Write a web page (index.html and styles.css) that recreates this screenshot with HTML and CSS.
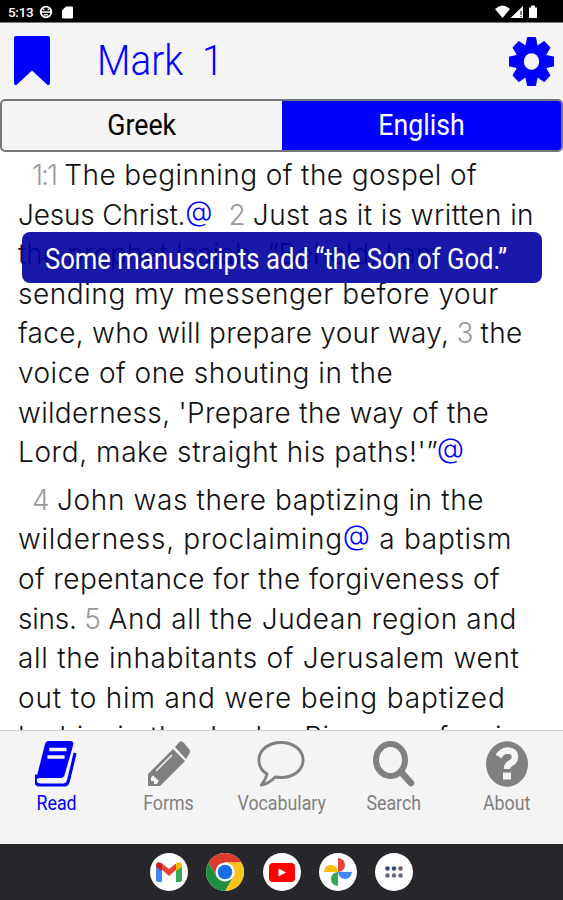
FILE: index.html
```
<!DOCTYPE html>
<html lang="en">

<head>
    <meta charset="UTF-8">
    <meta name="viewport" content="width=device-width, initial-scale=1.0">
    <title>Mark 1</title>
    <link rel="stylesheet" href="styles.css">
</head>

<body>
    <div class="status">
        <span class="clock">5:13</span>
        <svg class="status_face" width="14" height="14" viewBox="0 0 14 14">
            <circle cx="7" cy="7" r="5.3" fill="none" stroke="#fff" stroke-width="1.8" />
            <path d="M1.500 7h11M4 4.500h1.500M8.500 4.500H10M5 9.800h4" stroke="#fff" stroke-width="1.500" />
        </svg>
        <svg class="status_card" width="11" height="13" viewBox="0 0 11 13">
            <path d="M4 .5h6q1 0 1 1v10q0 1-1 1H1q-1 0-1-1v-7z" fill="#fff" />
        </svg>
        <svg class="status_right" width="44" height="14" viewBox="0 0 44 14">
            <path d="M0 4Q7.500-3 15 4L7.500 13z" fill="#fff" />
            <path d="M15.500 13L28 1v12z" fill="#fff" />
            <path d="M26 6v4M26 11v1" stroke="#000" stroke-width="1" />
            <path d="M34 2.500h2V.5h4v2h2V13h-8z" fill="#fff" />
        </svg>
    </div>

    <div class="header">
        <svg class="bookmark" width="36" height="50" viewBox="0 0 36 50">
            <path d="M2 0H34Q36 0 36 2V47Q36 50 33 48.500L18 34.500L3 48.500Q0 50 0 47V2Q0 0 2 0z" fill="#00f" />
        </svg>
        <div class="title">Mark&nbsp; 1</div>
        <svg class="gear" width="45" height="49" viewBox="-50 -50 100 100" preserveAspectRatio="none">
            <g fill="#00f">
                <path id="tooth" d="M-10-49Q-10-50-8-50H8Q10-50 10-49L14-30H-14z" />
                <use href="#tooth" transform="rotate(45)" />
                <use href="#tooth" transform="rotate(90)" />
                <use href="#tooth" transform="rotate(135)" />
                <use href="#tooth" transform="rotate(180)" />
                <use href="#tooth" transform="rotate(225)" />
                <use href="#tooth" transform="rotate(270)" />
                <use href="#tooth" transform="rotate(315)" />
            </g>
            <circle r="26.500" fill="none" stroke="#00f" stroke-width="19" />
        </svg>
    </div>

    <div class="tabs">
        <div class="tab"><span>Greek</span></div>
        <div class="tab active"><span>English</span></div>
    </div>

    <div class="reader">
        <p>
            <span class="line l1"><i>1:1</i> The beginning of the gospel of</span>
            <span class="line l2"><span class="tight">Jesus Christ.</span><b>@</b>&nbsp; <i>2</i> Just as it is written in</span>
            <span class="line l3">the prophet Isaiah, “Behold, I am</span>
            <span class="line l4">sending my messenger before your</span>
            <span class="line l5">face, who will prepare your way, <i>3</i> the</span>
            <span class="line l6">voice of one shouting in the</span>
            <span class="line l7">wilderness, 'Prepare the way of the</span>
            <span class="line l8">Lord, make straight his paths!'”<b>@</b></span>
        </p>
        <p>
            <span class="line l9"><i>4</i> John was there baptizing in the</span>
            <span class="line l10">wilderness, proclaiming<b>@</b> a baptism</span>
            <span class="line l11">of repentance for the forgiveness of</span>
            <span class="line l12"><span class="tight">sins.</span> <i>5</i> And all the Judean region and</span>
            <span class="line l13">all the inhabitants of Jerusalem went</span>
            <span class="line l14">out to him and were being baptized</span>
            <span class="line l15">by him in the Jordan River, confessing</span>
        </p>
        <div class="toast"><span>Some manuscripts add “the Son of God.”</span></div>
    </div>

    <div class="nav">
        <div class="item active">
            <svg width="42" height="46" viewBox="1 0 44 46" preserveAspectRatio="none">
                <path d="M15 0H38Q42 0 41 4L32 34Q31 37 28 37H6Q3 37 2 39L11 5Q12 0 15 0z" fill="currentColor" />
                <path d="M3 34Q0 38 2 42Q3 44 7 44H31Q35 44 36 40L43 12" fill="none" stroke="currentColor" stroke-width="3.200" />
                <path d="M16 8.500H34M14 16H32" stroke="#f4f4f4" stroke-width="3.400" />
            </svg>
            <span>Read</span>
        </div>
        <div class="item">
            <svg width="42" height="46" viewBox="0 0 42 46">
                <path d="M25 8L37 20L12 45H0V33z" fill="currentColor" />
                <path d="M27 6L31 1.500Q33-1 36 2L41 8Q43 10 41 13L38 18z" fill="currentColor" />
                <path d="M3 36.500L5 34.500L11 40L8.500 43H6V40H3z" fill="#f4f4f4" />
                <path d="M8 30L24 14" stroke="#f4f4f4" stroke-width="1.500" />
            </svg>
            <span>Forms</span>
        </div>
        <div class="item">
            <svg width="48" height="46" viewBox="0 0 50 46" preserveAspectRatio="none">
                <path d="M25 1.500C38 1.500 48 9 48 19S38 36.500 25 36.500Q22 36.500 19 36Q12 43 4.500 44Q9 39 10.500 33C5 30 2 25 2 19C2 9 12 1.500 25 1.500z" fill="none" stroke="currentColor" stroke-width="3" stroke-linejoin="round" />
            </svg>
            <span>Vocabulary</span>
        </div>
        <div class="item">
            <svg width="42" height="46" viewBox="0 0 42 46">
                <ellipse cx="17.500" cy="19" rx="14.500" ry="16" fill="none" stroke="currentColor" stroke-width="6" />
                <path d="M28 31L38 42" stroke="currentColor" stroke-width="6.500" stroke-linecap="round" />
            </svg>
            <span>Search</span>
        </div>
        <div class="item">
            <svg width="42" height="46" viewBox="0 0 42 46">
                <ellipse cx="21" cy="23" rx="21" ry="22.800" fill="currentColor" />
                <path d="M12.500 15.500Q16 9.500 22 9.500Q29 10 29 16Q29 20 25 22Q21 24 21 28" fill="none" stroke="#f4f4f4" stroke-width="6.500" />
                <path d="M17 31.500H25V38.500H17z" fill="#f4f4f4" />
            </svg>
            <span>About</span>
        </div>
    </div>

    <div class="dock">
        <div class="app">
            <svg width="26" height="20" viewBox="0 0 26 20">
                <path d="M0 4L6 8V20H2Q0 20 0 18z" fill="#4285f4" />
                <path d="M20 8L26 4V18Q26 20 24 20H20z" fill="#34a853" />
                <path d="M6 1.500L13 7L20 1.500V8L13 14L6 8z" fill="#ea4335" />
                <path d="M0 4Q0-2 6 1.500V9L0 5z" fill="#c5221f" />
                <path d="M26 4Q26-2 20 1.500V9L26 5z" fill="#fbbc04" />
            </svg>
        </div>
        <div class="app">
            <svg width="38" height="38" viewBox="-19 -19 38 38">
                <path d="M-16.450-9.500A19 19 0 0 1 16.450-9.500L0-9.500L-8.200 4.700z" fill="#db3a2c" />
                <path d="M16.450-9.500A19 19 0 0 1 0 19L8.200 4.700L0-9.500z" fill="#fcc31e" />
                <path d="M0 19A19 19 0 0 1-16.450-9.500L-8.200 4.700L8.200 4.700z" fill="#1f8e3e" />
                <circle r="9.500" fill="#fff" />
                <circle r="7.300" fill="#1a6fe8" />
            </svg>
        </div>
        <div class="app">
            <svg width="26" height="19" viewBox="0 0 26 19">
                <rect width="26" height="19" rx="4" fill="#f00" />
                <path d="M9.500 5.500L17 9.500L9.500 13.500z" fill="#fff" />
            </svg>
        </div>
        <div class="app">
            <svg width="28" height="28" viewBox="-14 -14 28 28">
                <path d="M0 0V-14Q7-13 7-7Q7-1 0 0z" fill="#ea4335" />
                <path d="M0 0H14Q13 7 7 7Q1 7 0 0z" fill="#4285f4" />
                <path d="M0 0V14Q-7 13-7 7Q-7 1 0 0z" fill="#34a853" />
                <path d="M0 0H-14Q-13-7-7-7Q-1-7 0 0z" fill="#fbbc04" />
            </svg>
        </div>
        <div class="app">
            <svg width="18" height="12" viewBox="0 0 18 12">
                <g fill="#34408c">
                    <circle cx="2.500" cy="2.500" r="2.200" />
                    <circle cx="9" cy="2.500" r="2.200" />
                    <circle cx="15.500" cy="2.500" r="2.200" fill="#7b5470" />
                </g>
                <g fill="#666681">
                    <circle cx="2.500" cy="9.500" r="2.200" />
                    <circle cx="9" cy="9.500" r="2.200" />
                    <circle cx="15.500" cy="9.500" r="2.200" />
                </g>
            </svg>
        </div>
    </div>
</body>

</html>
```
FILE: styles.css
```
body {
    margin: 0;
    display: flex;
    flex-direction: column;
    height: 100vh;
    overflow: hidden;
    background-color: #fff;
    font-family: Roboto, "Liberation Sans", sans-serif;
}

svg {
    display: block;
    flex: none;
}

/* android status bar */
.status {
    box-sizing: border-box;
    height: 23px;
    flex: none;
    display: flex;
    align-items: center;
    padding: 2px 24px 0 8px;
    background-color: #000;
    border-bottom: 1px solid #777;
    color: #fff;
}

.clock {
    width: 31px;
    font-size: 13.5px;
    font-weight: 500;
    letter-spacing: -0.3px;
}

.status_card {
    margin-left: 9px;
}

.status_right {
    margin-left: auto;
}

.header {
    height: 76px;
    flex: none;
    display: flex;
    align-items: center;
    padding: 0 9px 0 14px;
    background-color: #f4f4f4;
    color: #00f;
}

.title {
    margin-top: -2px;
    margin-left: 47px;
    font-size: 42px;
    font-weight: 300;
    transform: scaleX(0.92);
    transform-origin: left;
}

.gear {
    margin-left: auto;
}

/* Greek / English switch */
.tabs {
    box-sizing: border-box;
    height: 53px;
    flex: none;
    display: flex;
    border: 2px solid #777;
    border-radius: 5px;
    background-color: #f4f4f4;
    overflow: hidden;
}

.tab {
    flex: 1;
    display: flex;
    align-items: center;
    justify-content: center;
    font-size: 30px;
}

.tab span {
    margin-top: -2px;
    transform: scaleX(0.89);
}

.tab.active {
    background-color: #00f;
    color: #fff;
}

/* bible text */
.reader {
    position: relative;
    flex: 1;
    min-height: 0;
    padding: 4px 18px 0;
    overflow: hidden;
    color: #111;
    font-family: Inter, "Open Sans", sans-serif;
    font-size: 28px;
    font-weight: 300;
    line-height: 39.6px;
}

.reader p {
    margin: 0 0 8px;
}

.line {
    display: block;
    white-space: nowrap;
}

.reader i {
    margin-left: -1px;
    font-style: normal;
    letter-spacing: -1px;
    color: #999;
}

.reader b {
    position: relative;
    top: -4px;
    font-weight: 300;
    line-height: 0;
    color: #00f;
}

.tight {
    letter-spacing: -0.2px;
}

.l1 {
    padding-left: 15px;
    letter-spacing: 0.42px;
}

.l1 i {
    letter-spacing: -2px;
}

.l2 {
    letter-spacing: 0.4px;
}

.l4 {
    letter-spacing: 0.56px;
}

.l5 {
    letter-spacing: 0.31px;
}

.l6 {
    letter-spacing: 0.5px;
}

.l7 {
    letter-spacing: 0.32px;
}

.l8 {
    letter-spacing: 0.58px;
}

.l9 {
    padding-left: 15px;
    letter-spacing: 0.62px;
}

.l10 {
    letter-spacing: 0.72px;
}

.l11 {
    letter-spacing: 0.4px;
}

.l12 {
    letter-spacing: 0.65px;
}

.l13 {
    letter-spacing: 0.71px;
}

.l14 {
    letter-spacing: 0.84px;
}

.l15 {
    letter-spacing: 0.6px;
}

.toast {
    position: absolute;
    top: 80px;
    left: 22px;
    box-sizing: border-box;
    width: 520px;
    height: 51px;
    padding-left: 23px;
    border-radius: 8px;
    background-color: rgba(0, 0, 160, 0.9);
    color: #fff;
    font-family: Roboto, sans-serif;
    font-size: 29px;
    font-weight: 400;
    line-height: 54px;
    white-space: nowrap;
}

.toast span {
    display: inline-block;
    transform: scaleX(0.884);
    transform-origin: left;
}

/* bottom menu */
.nav {
    box-sizing: border-box;
    height: 114px;
    flex: none;
    display: flex;
    padding-top: 10px;
    border-top: 1px solid #d0d0d0;
    background-color: #f4f4f4;
}

.item {
    flex: 1;
    display: flex;
    flex-direction: column;
    align-items: center;
    color: #808080;
}

.item span {
    margin-top: 3px;
    font-size: 20px;
    line-height: 26px;
    transform: scaleX(0.89);
}

.item.active {
    color: #00f;
}

.dock {
    height: 56px;
    flex: none;
    display: flex;
    align-items: center;
    justify-content: center;
    gap: 18.3px;
    background-color: #26262b;
}

.app {
    width: 38px;
    height: 38px;
    display: flex;
    align-items: center;
    justify-content: center;
    border-radius: 50%;
    background-color: #fff;
}
```
